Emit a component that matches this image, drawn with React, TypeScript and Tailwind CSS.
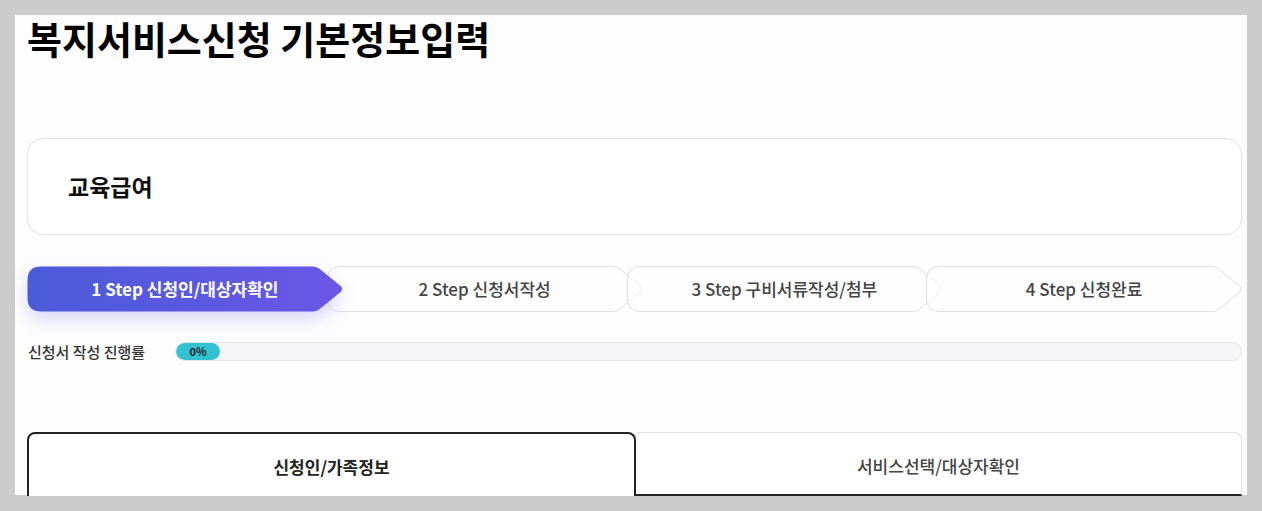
import React from 'react'

const steps = [
  { no: 1, label: '신청인/대상자확인' },
  { no: 2, label: '신청서작성' },
  { no: 3, label: '구비서류작성/첨부' },
  { no: 4, label: '신청완료' },
]

// chevron outline, drawn in a 316x46 box
const stepPath =
  'M14,0.5 H286 Q290,0.5 293,3 L314.5,20.5 Q316,23 314.5,25.5 L293,43 Q290,45.5 286,45.5 H14 Q0.5,45.5 0.5,32 V14 Q0.5,0.5 14,0.5 Z'

function StepShape({ active }: { active: boolean }) {
  return (
    <svg
      className={
        active
          ? 'absolute inset-0 w-full h-full drop-shadow-[0_8px_9px_rgba(88,80,220,0.22)]'
          : 'absolute inset-0 w-full h-full'
      }
      viewBox='0 0 316 46'
      preserveAspectRatio='none'
    >
      <defs>
        <linearGradient id='stepGrad' x1='0' y1='0' x2='1' y2='0'>
          <stop offset='0' stopColor='#4a5bd8' />
          <stop offset='1' stopColor='#6b56e7' />
        </linearGradient>
      </defs>
      {active ? (
        <path d={stepPath} fill='url(#stepGrad)' />
      ) : (
        <path d={stepPath} fill='#ffffff' fillOpacity='0.55' stroke='#dedee2' strokeWidth='1' vectorEffect='non-scaling-stroke' />
      )}
    </svg>
  )
}

function App() {
  const progress = 0

  return (
    <div className='w-full h-screen bg-[#cccccc] pt-[15px] pl-[15px] pr-[15px] pb-[16px] overflow-hidden' style={{ fontFamily: '"Noto Sans CJK KR", "Noto Sans", sans-serif' }}>
      <div className='w-full h-full bg-[#fdfdfe] pl-[12px] pr-[5px]'>
        <h1 className='text-[38px] leading-[46px] font-bold text-black'>복지서비스신청 기본정보입력</h1>

        <div className='mt-[77px] h-[97px] border border-[#e2e2e4] rounded-2xl bg-white flex items-center pl-[40px]'>
          <h3 className='text-[23px] font-bold text-[#111]'>교육급여</h3>
        </div>

        <div className='mt-[31px] flex h-[46px]'>
          {steps.map((s, i) => (
            <div
              key={s.no}
              className={
                i === 0
                  ? 'relative flex-1 z-10 flex items-center justify-center'
                  : 'relative flex-1 -ml-4 flex items-center justify-center'
              }
            >
              <StepShape active={i === 0} />
              <span
                className={
                  i === 0
                    ? 'relative text-[17px] font-bold text-white'
                    : 'relative text-[17px] font-medium text-[#444]'
                }
              >
                {s.no} Step {s.label}
              </span>
            </div>
          ))}
        </div>

        <div className='mt-[30px] flex items-center h-[19px]'>
          <div className='w-[148px] shrink-0 text-[15px] leading-[19px] font-medium text-[#333] pl-[1px]'>신청서 작성 진행률</div>
          <div className='flex-1 h-[19px] rounded-full border border-[#e6e6ea] bg-[#f5f5f8] overflow-hidden'>
            <div className='w-[44px] h-full rounded-full bg-[#33c2d3] flex items-center justify-center'>
              <span className='text-[11px] font-bold text-[#222]'>{progress}%</span>
            </div>
          </div>
        </div>

        <div className='mt-[71px] flex h-[64px]'>
          <div className='flex-1 border-2 border-b-0 border-[#222] rounded-t-lg bg-white flex items-center justify-center pt-1'>
            <span className='text-[17px] font-bold text-[#222]'>신청인/가족정보</span>
          </div>
          <div className='flex-1 border-t border-r border-[#e2e2e4] border-b-2 border-b-[#222] rounded-tr-lg bg-white flex items-center justify-center pt-1'>
            <span className='text-[17px] font-medium text-[#444]'>서비스선택/대상자확인</span>
          </div>
        </div>
      </div>
    </div>
  )
}

export default App
